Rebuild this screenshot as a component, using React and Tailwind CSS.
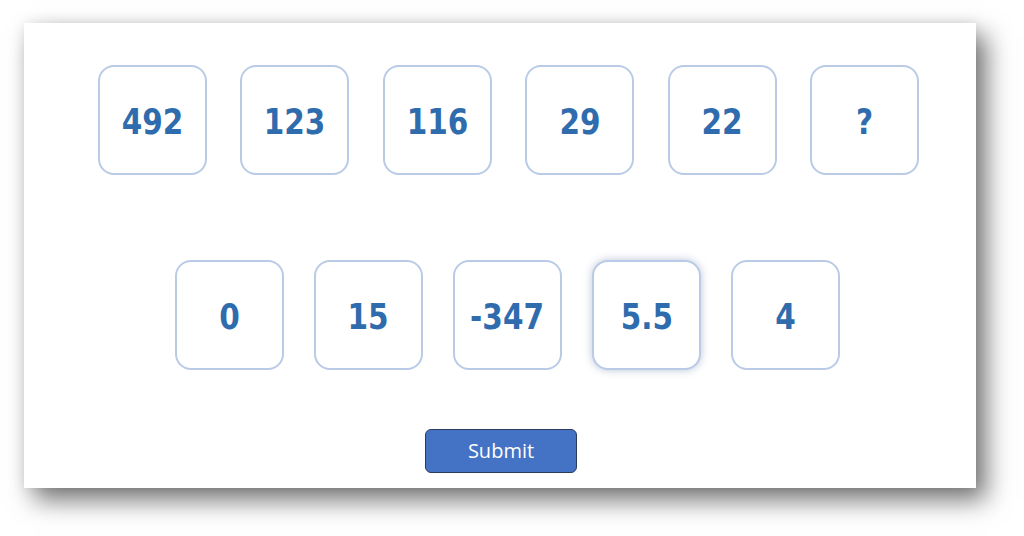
const topRow = ["492", "123", "116", "29", "22", "?"];
const options = ["0", "15", "-347", "5.5", "4"];

const Tile = ({ label, glow }) => (
    <div
        className={
            "flex h-[110px] w-[109px] items-center justify-center rounded-[16px] border-2 border-[#b9cbe6] bg-white pt-[4px] " +
            (glow ? "shadow-[0_0_8px_rgba(60,90,140,0.35)]" : "")
        }
    >
        <span className="inline-block scale-x-[0.82] text-[36px] font-bold tracking-[0px] text-[#2f6cae] [font-family:'DejaVu_Sans',sans-serif]">
            {label}
        </span>
    </div>
);

const App = () => {
    return (
        <div className="h-[536px] w-full bg-white pt-[23px] pl-[24px]">
            <div className="flex h-[465px] w-[952px] flex-col bg-white shadow-[10px_12px_24px_rgba(0,0,0,0.55),0_0_12px_rgba(0,0,0,0.08)]">
                <div className="mt-[42px] ml-[74px] flex gap-[33.4px]">
                    {topRow.map((n) => (
                        <Tile key={n} label={n} />
                    ))}
                </div>
                <div className="mt-[85px] ml-[151px] flex gap-[30px]">
                    {options.map((n) => (
                        <Tile key={n} label={n} glow={n === "5.5"} />
                    ))}
                </div>
                <button className="mt-[59px] ml-[401px] h-[44px] w-[152px] rounded-[6px] border border-[#2a3c5e] bg-[#4472c4] text-[20px] text-white [font-family:'Open_Sans',sans-serif]">
                    Submit
                </button>
            </div>
        </div>
    );
};

export default App;
